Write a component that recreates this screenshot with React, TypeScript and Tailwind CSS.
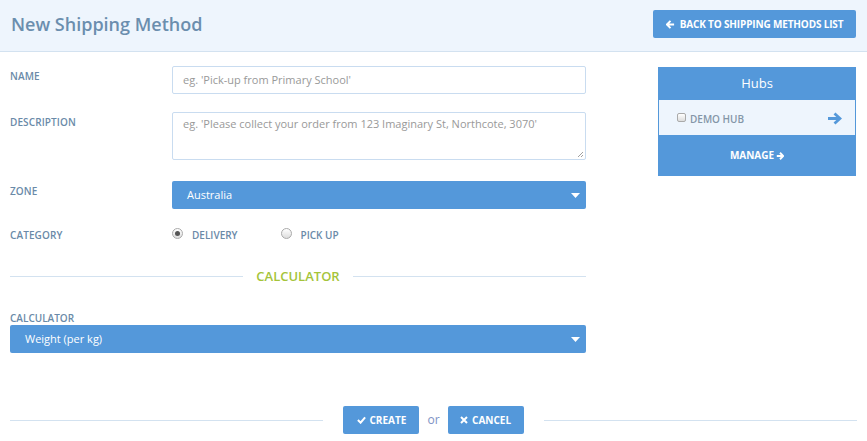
import React from "react";

function Caret() {
  return (
    <svg width="9" height="5" viewBox="0 0 9 5" className="shrink-0">
      <path d="M0 0 L9 0 L4.5 5 Z" fill="#fff" />
    </svg>
  );
}

function Label({ children }: { children: React.ReactNode }) {
  return (
    <div className="w-[162px] shrink-0 text-[10px] font-semibold uppercase tracking-[0.01em] text-[#6a8aa8]">
      {children}
    </div>
  );
}

function Radio({ checked }: { checked?: boolean }) {
  return (
    <span className="w-[11px] h-[11px] rounded-full border border-[#aaa] bg-gradient-to-b from-[#fff] to-[#ddd] flex items-center justify-center">
      {checked && <span className="w-[5px] h-[5px] rounded-full bg-[#555]" />}
    </span>
  );
}

export default function App() {
  return (
    <div className="w-[867px] h-[441px] bg-white overflow-hidden" style={{ fontFamily: '"Open Sans", "Noto Sans", sans-serif' }}>
      <div className="h-[52px] bg-[#eef5fd] border-b border-[#d3e2f0] flex items-center justify-between pl-[11px] pr-[11px]">
        <div className="text-[18px] font-semibold text-[#6b8eae] -mt-[3px]">New Shipping Method</div>
        <button className="h-[28px] w-[203px] bg-[#5498da] rounded-[2px] text-white text-[10px] font-bold uppercase tracking-[-0.015em] flex items-center justify-center gap-[5px] -mt-[3px]">
          <svg width="9" height="9" viewBox="0 0 10 10"><path d="M5 1 L1 5 L5 9 M1.5 5 H9" stroke="#fff" strokeWidth="2.2" fill="none" /></svg>
          Back to Shipping Methods List
        </button>
      </div>
      <div className="flex">
        <div className="w-[576px] ml-[10px] shrink-0">
          <div className="flex items-start mt-[14px]">
            <Label><div className="pt-[3px]">Name</div></Label>
            <div className="flex-1 h-[28px] border border-[#c9dcf0] rounded-[2px] flex items-center px-[10px] text-[11px] text-[#999]">eg. 'Pick-up from Primary School'</div>
          </div>
          <div className="flex items-start mt-[18px]">
            <Label><div className="pt-[3px]">Description</div></Label>
            <div className="relative flex-1 h-[48px] border border-[#c9dcf0] rounded-[2px] px-[10px] pt-[3px] text-[11px] text-[#999]">
              eg. 'Please collect your order from 123 Imaginary St, Northcote, 3070'
              <svg className="absolute right-[1px] bottom-[1px]" width="7" height="7" viewBox="0 0 7 7"><path d="M6 1 L1 6 M6 4 L4 6" stroke="#888" strokeWidth="0.8" /></svg>
            </div>
          </div>
          <div className="flex items-center mt-[21px]">
            <Label><div className="-mt-[8px]">Zone</div></Label>
            <div className="flex-1 h-[28px] bg-[#5498da] rounded-[2px] flex items-center justify-between pl-[15px] pr-[6px] text-[11px] text-white">
              <span>Australia</span>
              <Caret />
            </div>
          </div>
          <div className="flex items-center mt-[17px] h-[18px]">
            <Label>Category</Label>
            <div className="flex items-center text-[10px] font-semibold text-[#6a8aa8]">
              <span className="-mt-[4px]"><Radio checked /></span>
              <span className="ml-[9px]">DELIVERY</span>
              <span className="ml-[43px] -mt-[4px]"><Radio /></span>
              <span className="ml-[9px]">PICK UP</span>
            </div>
          </div>
          <div className="flex items-center mt-[26px]">
            <div className="flex-1 h-px bg-[#d3e2f0]" />
            <div className="px-[13px] text-[13px] font-semibold text-[#a5c43a] leading-none">CALCULATOR</div>
            <div className="flex-1 h-px bg-[#d3e2f0]" />
          </div>
          <div className="mt-[30px] text-[10px] font-semibold uppercase text-[#6a8aa8] leading-none">Calculator</div>
          <div className="mt-[2px] h-[28px] bg-[#5498da] rounded-[2px] flex items-center justify-between pl-[15px] pr-[6px] text-[11px] text-white">
            <span>Weight (per kg)</span>
            <Caret />
          </div>
        </div>
        <div className="ml-[72px] mt-[15px] w-[198px] shrink-0 self-start">
          <div className="h-[33px] bg-[#5498da] flex items-center justify-center text-[13px] text-white">Hubs</div>
          <div className="h-[35px] bg-[#eef5fd] border-x border-[#5498da] flex items-center pl-[18px] pr-[13px]">
            <span className="w-[9px] h-[9px] border border-[#aaa] rounded-[2px] bg-gradient-to-b from-[#fff] to-[#ddd] -mt-[1px]" />
            <span className="ml-[4px] mt-[3px] text-[10px] font-semibold text-[#8496a8]">DEMO HUB</span>
            <span className="ml-auto mt-[1px]">
              <svg width="15" height="13" viewBox="0 0 15 13"><path d="M7.5 1.5 L13 6.5 L7.5 11.5 M12.5 6.5 H1" stroke="#5498da" strokeWidth="2.8" fill="none" /></svg>
            </span>
          </div>
          <div className="h-[41px] bg-[#5498da] flex items-center justify-center gap-[2px] text-[10px] font-bold text-white">
            MANAGE
            <svg width="8" height="8" viewBox="0 0 10 10"><path d="M5 1 L9 5 L5 9 M8.5 5 H1" stroke="#fff" strokeWidth="2.4" fill="none" /></svg>
          </div>
        </div>
      </div>
      <div className="flex items-center mt-[53px] px-[10px]">
        <div className="flex-1 h-px bg-[#d3e2f0]" />
        <div className="flex items-center mx-[20px]">
          <button className="w-[76px] h-[28px] bg-[#5498da] rounded-[2px] text-white text-[10px] font-bold flex items-center justify-center gap-[4px]">
            <svg width="9" height="8" viewBox="0 0 10 8"><path d="M1 4 L4 7 L9 1" stroke="#fff" strokeWidth="2.2" fill="none" /></svg>
            CREATE
          </button>
          <span className="mx-[8px] text-[12px] text-[#7d92c4]">or</span>
          <button className="w-[76px] h-[28px] bg-[#5498da] rounded-[2px] text-white text-[10px] font-bold flex items-center justify-center gap-[4px]">
            <svg width="8" height="8" viewBox="0 0 8 8"><path d="M1 1 L7 7 M7 1 L1 7" stroke="#fff" strokeWidth="2" fill="none" /></svg>
            CANCEL
          </button>
        </div>
        <div className="flex-1 h-px bg-[#d3e2f0]" />
      </div>
    </div>
  );
}
